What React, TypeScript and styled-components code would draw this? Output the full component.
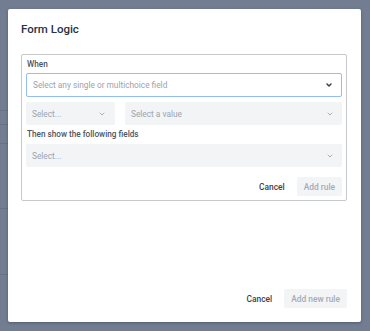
import React from "react"
import styled, { createGlobalStyle } from "styled-components"

const GlobalStyle = createGlobalStyle`
    html, body {
        margin: 0;
        padding: 0;
        background: #727d92;
        font-family: Roboto, "Liberation Sans", Arial, sans-serif;
        -webkit-font-smoothing: antialiased;
    }
`

const Screen = styled.div`
    position: relative;
    width: 370px;
    height: 331px;
    overflow: hidden;
    background: #727d92;
`

// faint rows of the page behind the overlay
const BehindRows = styled.div`
    display: flex;
    flex-direction: column;
    width: 8px;
    padding-top: 110px;
`
const BehindRow = styled.div<{ h: number }>`
    height: ${(p) => p.h}px;
    border-top: 1px solid #67718a;
`

const Modal = styled.div`
    position: absolute;
    top: 9px;
    left: 8px;
    width: 353px;
    height: 313px;
    box-sizing: border-box;
    padding: 12px 14px 14px 13px;
    display: flex;
    flex-direction: column;
    background: #ffffff;
    border-radius: 2px;
    box-shadow: 0 1px 3px rgba(20, 30, 50, 0.35);
`

const Title = styled.h2`
    margin: 0;
    font-size: 11.5px;
    line-height: 16px;
    font-weight: 500;
    color: #273244;
`

const RuleBox = styled.div`
    margin-top: 17px;
    padding: 3px 4px 4px 4px;
    border: 1px solid #c6c8cc;
    border-radius: 2px;
    display: flex;
    flex-direction: column;
`

const Label = styled.div<{ mt?: number }>`
    margin-top: ${(p) => p.mt ?? 0}px;
    font-size: 8.2px;
    line-height: 12px;
    font-weight: 500;
    color: #4b5563;
    padding-left: 1px;
`

const SelectBox = styled.div<{ focused?: boolean; mt?: number }>`
    margin-top: ${(p) => p.mt ?? 0}px;
    height: ${(p) => (p.focused ? 24 : 23)}px;
    flex: none;
    box-sizing: border-box;
    display: flex;
    align-items: center;
    justify-content: space-between;
    padding: 0 9px 0 6px;
    border-radius: 2px;
    background: ${(p) => (p.focused ? "#ffffff" : "#f3f4f6")};
    border: ${(p) => (p.focused ? "1px solid #93bdf5" : "none")};
    font-size: 8.3px;
    color: #9ca3af;
`

const SelectRow = styled.div`
    display: flex;
    gap: 10px;
    margin-top: 5px;
`

const SmallSelect = styled(SelectBox)`
    width: 89px;
    padding-right: 10px;
`

const WideSelect = styled(SelectBox)`
    flex: 1;
`

const Actions = styled.div<{ mt?: number }>`
    display: flex;
    justify-content: flex-end;
    align-items: center;
    gap: 12px;
    margin-top: ${(p) => p.mt ?? 0}px;
`

const Footer = styled(Actions)`
    margin-top: auto;
`

const TextButton = styled.button`
    border: none;
    background: none;
    padding: 0;
    font-family: inherit;
    font-size: 8.4px;
    font-weight: 500;
    color: #374151;
    cursor: pointer;
`

const GhostButton = styled.button`
    border: none;
    border-radius: 2px;
    background: #f3f4f6;
    height: 19px;
    padding: 0 7px;
    font-family: inherit;
    font-size: 8.4px;
    font-weight: 500;
    color: #a4abb6;
`

function Chevron({ dark }: { dark?: boolean }) {
    return (
        <svg width="6" height="4" viewBox="0 0 6 4">
            <polyline
                points="1,1 3,3 5,1"
                fill="none"
                stroke={dark ? "#374151" : "#a9aeb8"}
                strokeWidth={dark ? 1.5 : 1}
                strokeLinecap="round"
                strokeLinejoin="round"
            />
        </svg>
    )
}

export default function App() {
    return (
        <Screen>
            <GlobalStyle />
            <BehindRows>
                <BehindRow h={13} />
                <BehindRow h={18} />
                <BehindRow h={64} />
                <BehindRow h={65} />
                <BehindRow h={40} />
            </BehindRows>
            <Modal>
                <Title>Form Logic</Title>
                <RuleBox>
                    <Label>When</Label>
                    <SelectBox focused mt={3}>
                        <span>Select any single or multichoice field</span>
                        <Chevron dark />
                    </SelectBox>
                    <SelectRow>
                        <SmallSelect>
                            <span>Select...</span>
                            <Chevron />
                        </SmallSelect>
                        <WideSelect>
                            <span>Select a value</span>
                            <Chevron />
                        </WideSelect>
                    </SelectRow>
                    <Label mt={3}>Then show the following fields</Label>
                    <SelectBox mt={4}>
                        <span>Select...</span>
                        <Chevron />
                    </SelectBox>
                    <Actions mt={10}>
                        <TextButton>Cancel</TextButton>
                        <GhostButton disabled>Add rule</GhostButton>
                    </Actions>
                </RuleBox>
                <Footer>
                    <TextButton>Cancel</TextButton>
                    <GhostButton disabled>Add new rule</GhostButton>
                </Footer>
            </Modal>
        </Screen>
    )
}
